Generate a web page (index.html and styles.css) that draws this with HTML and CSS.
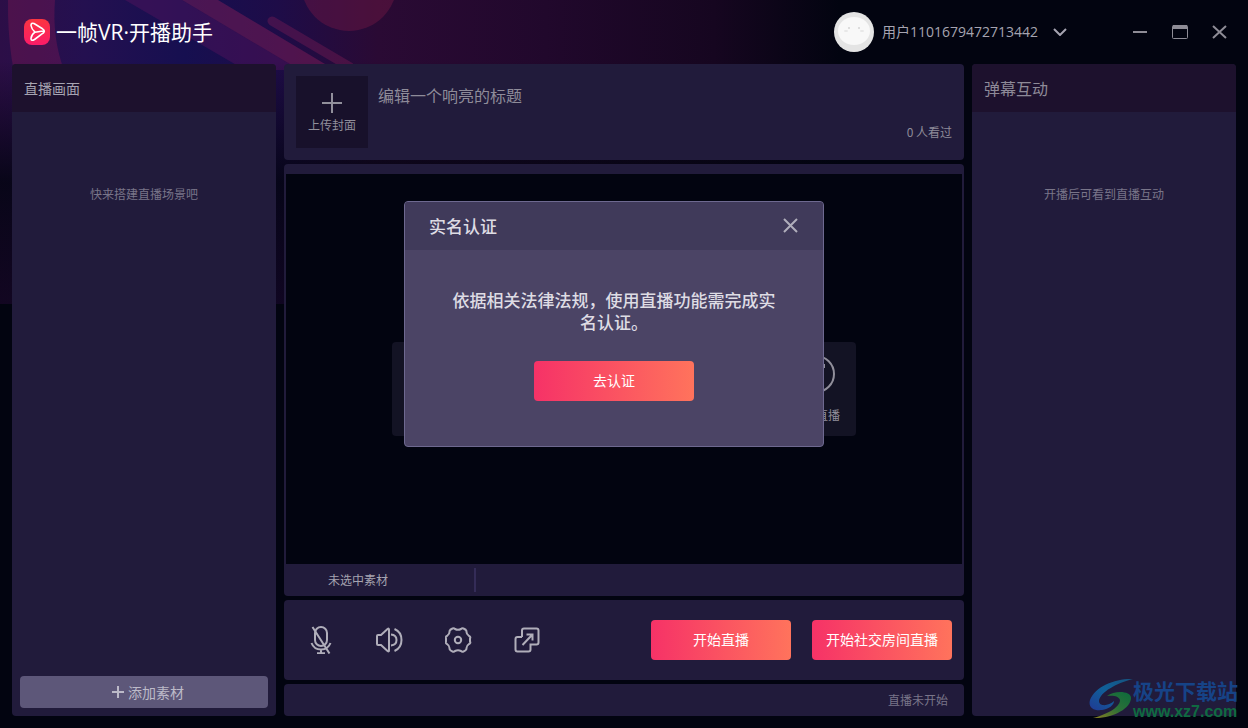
FILE: index.html
```html
<!DOCTYPE html>
<html lang="zh-CN">
<head>
    <meta charset="UTF-8">
    <meta name="viewport" content="width=device-width, initial-scale=1.0">
    <title>一帧VR·开播助手</title>
    <link rel="stylesheet" href="styles.css">
</head>
<body>

<!-- background art -->
<svg class="backdrop" width="840" height="304" viewBox="0 0 840 304" aria-hidden="true">
    <defs>
        <linearGradient id="base" x1="0" y1="0" x2="1" y2="0">
            <stop offset="0" stop-color="#2c0e47"/>
            <stop offset="0.1" stop-color="#241050"/>
            <stop offset="0.22" stop-color="#160f50"/>
            <stop offset="0.33" stop-color="#1e0c48"/>
            <stop offset="0.45" stop-color="#2a0a34"/>
            <stop offset="0.65" stop-color="#21082c"/>
            <stop offset="0.85" stop-color="#160620"/>
            <stop offset="1" stop-color="#020410"/>
        </linearGradient>
        <linearGradient id="fade" x1="0" y1="0" x2="0" y2="1">
            <stop offset="0.2" stop-color="#020410" stop-opacity="0"/>
            <stop offset="0.6" stop-color="#020410" stop-opacity="0.85"/>
            <stop offset="1" stop-color="#0c0418" stop-opacity="0.8"/>
        </linearGradient>
    </defs>
    <rect width="840" height="304" fill="url(#base)"/>
    <path d="M8 0H55Q52 38 64 70L80 110H24Q7 60 8 0z" fill="#8a1a55" opacity="0.35"/>
    <path d="M125 0H182L300 70H245z" fill="#5c1560" opacity="0.4"/>
    <path d="M182 0H218L335 70H300z" fill="#8a1f58" opacity="0.45"/>
    <path d="M272 21L350 67" stroke="#8a1f58" stroke-width="9" stroke-linecap="round" opacity="0.35"/>
    <circle cx="349" cy="-17" r="48" fill="#7a1a45" opacity="0.4"/>
    <rect width="840" height="304" fill="url(#fade)"/>
</svg>

<header class="topbar">
    <div class="brand">
        <svg width="26" height="26" viewBox="0 0 26 26">
            <defs>
                <linearGradient id="logo" x1="0" y1="0" x2="0" y2="1">
                    <stop offset="0" stop-color="#fb3540"/>
                    <stop offset="1" stop-color="#fb1b68"/>
                </linearGradient>
            </defs>
            <rect width="26" height="26" rx="8" fill="url(#logo)"/>
            <path d="M11 13.200L19 12Q21 13 19 14.200L10.500 20.500Q7 22.500 7 19.500Q7.500 15.500 11 13.200Q7.500 10 7 6.500Q7 3.500 10 4.500L18.500 9.800Q21 11.500 20 13" fill="none" stroke="#fff" stroke-width="1.600" stroke-linejoin="round"/>
        </svg>
        <h1>一帧VR·开播助手</h1>
    </div>
    <div class="account">
        <svg width="40" height="40" viewBox="0 0 40 40">
            <circle cx="20" cy="20" r="20" fill="#e4e4e4"/>
            <ellipse cx="20" cy="19" rx="16" ry="14" fill="#f8f8f8"/>
            <g fill="#d5d5d5">
                <circle cx="15" cy="16" r="1"/>
                <circle cx="25" cy="16" r="1"/>
                <ellipse cx="12" cy="19" rx="2" ry="1" fill="#e6e6e6"/>
                <ellipse cx="28" cy="19" rx="2" ry="1" fill="#e6e6e6"/>
            </g>
        </svg>
        <button class="user">用户1101679472713442
            <svg width="14" height="8" viewBox="0 0 14 8"><path d="M1 1l6 6 6-6"/></svg>
        </button>
    </div>
    <div class="window-buttons">
        <button aria-label="最小化"><svg width="16" height="16" viewBox="0 0 16 16"><path d="M1 8h14"/></svg></button>
        <button aria-label="最大化"><svg width="16" height="16" viewBox="0 0 16 16"><rect x="0.500" y="1.500" width="15" height="13" rx="1" stroke-width="1"/><path d="M1 3h14" stroke-width="4"/></svg></button>
        <button aria-label="关闭"><svg width="16" height="16" viewBox="0 0 16 16"><path d="M1 2l13 12M14 2L1 14"/></svg></button>
    </div>
</header>

<main>
    <aside class="panel side">
        <h2 class="small">直播画面</h2>
        <p>快来搭建直播场景吧</p>
        <button class="add">
            <svg width="12" height="12" viewBox="0 0 12 12"><path d="M6 0v12M0 6h12"/></svg>
            添加素材
        </button>
    </aside>

    <section class="center">
        <div class="panel info">
            <button class="cover">
                <svg width="20" height="20" viewBox="0 0 20 20"><path d="M10 0v20M0 10h20"/></svg>
                上传封面
            </button>
            <input type="text" aria-label="标题" placeholder="编辑一个响亮的标题">
            <span class="views">0 人看过</span>
        </div>

        <div class="panel preview">
            <div class="stage">
                <div class="sources">
                    <button class="source">
                        <svg width="38" height="38" viewBox="0 0 38 38"><circle cx="19" cy="19" r="18"/><path d="M24 10h3v3"/></svg>
                        <span>直播</span>
                    </button>
                </div>
            </div>
            <div class="selection">
                <span>未选中素材</span>
            </div>
        </div>

        <div class="panel controls">
            <div class="tools">
                <button aria-label="麦克风">
                    <svg width="28" height="28" viewBox="0 0 28 28"><rect x="8" y="1" width="12" height="19" rx="6"/><path d="M4.500 17c1.500 4 5 6.500 9.500 6.500s8-2.500 9.500-6.500M14 23.500V27M10 27.200h8M5.500 1l17 26.500"/></svg>
                </button>
                <button aria-label="音量">
                    <svg width="28" height="28" viewBox="0 0 28 28"><path d="M1 10Q1 9 2 9H5L11.500 3Q13 2 13 3.500V24.500Q13 26 11.500 25L5 19H2Q1 19 1 18zM15 8.500Q20.500 9 20.500 14T15 19.500M18.500 3Q25.500 6 25.500 14T18.500 25"/></svg>
                </button>
                <button aria-label="设置">
                    <svg width="28" height="28" viewBox="0 0 28 28"><path d="M7.500 2.500Q9 2 10 3Q13 4.500 16 3Q17 2 18.500 2.500Q21 3.500 21.500 5Q21 8 24 10Q26 11 25 12.500V15.500Q26 17 24 18Q21 20 21.500 23Q21 24.500 18.500 25.500Q17 26 16 25Q13 23.500 10 25Q9 26 7.500 25.500Q5 24.500 4.500 23Q5 20 2 18Q0 17 1 15.500V12.500Q0 11 2 10Q5 8 4.500 5Q5 3.500 7.500 2.500z"/><circle cx="13" cy="14" r="3.200"/></svg>
                </button>
                <button aria-label="弹出窗口">
                    <svg width="28" height="28" viewBox="0 0 28 28"><path d="M8 11V4.500Q8 2.500 10 2.500H22.500Q24.500 2.500 24.500 4.500V16.500Q24.500 18.500 22.500 18.500H16.500V23.500Q16.500 25.500 14.500 25.500H3.500Q1.500 25.500 1.500 23.500V13Q1.500 11 3.500 11H8M8.500 19L18 9M12.500 8.500H18.500V14.500"/></svg>
                </button>
            </div>
            <button class="primary">开始直播</button>
            <button class="primary">开始社交房间直播</button>
        </div>

        <div class="panel status">直播未开始</div>
    </section>

    <aside class="panel side">
        <h2>弹幕互动</h2>
        <p>开播后可看到直播互动</p>
    </aside>
</main>

<div class="overlay">
    <div class="dialog" role="dialog" aria-labelledby="dialogTitle">
        <div class="dialog-head">
            <h2 id="dialogTitle">实名认证</h2>
            <button aria-label="关闭"><svg width="16" height="16" viewBox="0 0 16 16"><path d="M1 1l13 13M14 1L1 14"/></svg></button>
        </div>
        <div class="dialog-body">
            <p>依据相关法律法规，使用直播功能需完成实名认证。</p>
            <button class="primary">去认证</button>
        </div>
    </div>
</div>

<div class="watermark">
    <svg width="44" height="42" viewBox="0 0 44 42">
        <defs>
            <linearGradient id="swirlBlue" x1="1" y1="0" x2="0" y2="1">
                <stop offset="0" stop-color="#17527f"/>
                <stop offset="0.500" stop-color="#106098"/>
                <stop offset="1" stop-color="#203a94"/>
            </linearGradient>
            <linearGradient id="swirlGreen" x1="1" y1="0" x2="0" y2="1">
                <stop offset="0" stop-color="#0c6a3c"/>
                <stop offset="0.500" stop-color="#2c7038"/>
                <stop offset="1" stop-color="#8a7e20"/>
            </linearGradient>
        </defs>
        <path d="M44 1C28 0 6 8 1 22C-1 29 4 33 13 32C20 31 25 27 25 23C20 28 10 29 10 23C11 14 28 5 44 1z" fill="url(#swirlBlue)"/>
        <path d="M18 18C26 12 42 13 42 20C42 30 24 41 4 40C16 37 31 30 31 22C30 18 24 17 18 18z" fill="url(#swirlGreen)"/>
    </svg>
    <div>
        <strong>极光下载站</strong>
        <span>www.xz7.com</span>
    </div>
</div>

</body>
</html>
```
FILE: styles.css
```css
* {
    box-sizing: border-box;
}

body {
    margin: 0;
    min-height: 100vh;
    display: flex;
    flex-direction: column;
    font-family: 'Noto Sans CJK SC', sans-serif;
    font-size: 12px;
    line-height: 16px;
    color: #a6a4b1;
    background-color: #020410;
}

h1, h2, p {
    margin: 0;
    font-weight: 400;
}

button {
    padding: 0;
    border: none;
    background: none;
    font: inherit;
    color: inherit;
    cursor: pointer;
}

svg {
    display: block;
    flex: none;
}

button svg {
    fill: none;
    stroke: currentColor;
    stroke-width: 2;
}

.backdrop {
    position: absolute;
    top: 0;
    left: 0;
    z-index: -1;
}

.topbar {
    height: 64px;
    padding: 0 20px 0 24px;
    display: flex;
    align-items: center;
    font-family: 'Open Sans', 'Noto Sans CJK SC', sans-serif;
}

.brand {
    flex: 1;
    display: flex;
    align-items: center;
    gap: 6px;
}

.brand h1 {
    font-size: 21px;
    line-height: 24px;
    color: #fff;
}

.account {
    display: flex;
    align-items: center;
    gap: 8px;
}

.user {
    display: flex;
    align-items: center;
    gap: 15px;
    font-size: 14px;
}

.window-buttons {
    display: flex;
    gap: 24px;
    margin-left: 65px;
    color: #8e8c96;
}

main {
    flex: 1;
    display: grid;
    grid-template-columns: 264px 1fr 264px;
    gap: 8px;
    padding: 0 12px 12px;
}

.panel {
    border-radius: 4px;
    background-color: #211b3b;
}

.side {
    display: flex;
    flex-direction: column;
    overflow: hidden;
}

.side h2 {
    padding: 12px;
    font-size: 16px;
    line-height: 24px;
    color: #8e8a98;
    background-color: #1d112d;
}

.side .small {
    font-size: 14px;
    color: #a6a4b1;
}

.side p {
    margin-top: 74px;
    text-align: center;
    color: #797589;
}

.add {
    display: flex;
    align-items: center;
    justify-content: center;
    gap: 4px;
    height: 32px;
    margin: auto 8px 8px;
    padding-left: 8px;
    border-radius: 4px;
    font-size: 14px;
    color: #bcbac8;
    background-color: #5d5779;
}

.center {
    display: flex;
    flex-direction: column;
    gap: 4px;
}

.info {
    display: flex;
    align-items: flex-start;
    gap: 10px;
    padding: 12px;
}

.cover {
    display: flex;
    flex-direction: column;
    align-items: center;
    justify-content: center;
    gap: 4px;
    width: 72px;
    height: 72px;
    padding-top: 2px;
    color: #918f9b;
    background-color: #18112b;
}

.info input {
    flex: 1;
    height: 38px;
    padding: 0;
    border: none;
    outline: none;
    font: inherit;
    font-size: 16px;
    color: #a6a4b1;
    background: none;
}

.info input::placeholder {
    color: #8e8b99;
}

.views {
    align-self: flex-end;
    margin-bottom: 8px;
    color: #8e8b99;
}

.preview {
    flex: 1;
    display: flex;
    flex-direction: column;
    padding: 10px 2px 0;
}

.stage {
    flex: 1;
    display: flex;
    align-items: center;
    justify-content: center;
    padding-top: 40px;
    background-color: #020410;
}

.sources {
    display: flex;
    justify-content: flex-end;
    width: 464px;
    height: 94px;
    padding: 13px 16px;
    border-radius: 4px;
    background-color: #131324;
}

.source {
    display: flex;
    flex-direction: column;
    align-items: center;
    justify-content: space-between;
    width: 48px;
    color: #918f9b;
}

.source span {
    align-self: flex-end;
}

.selection {
    display: flex;
    align-items: center;
    height: 32px;
}

.selection span {
    width: 190px;
    padding: 4px 0 4px 42px;
    border-right: 2px solid #342c57;
}

.controls {
    display: flex;
    align-items: center;
    gap: 21px;
    height: 80px;
    padding: 0 12px 0 23px;
}

.tools {
    flex: 1;
    display: flex;
    gap: 41px;
    color: #b0aeba;
}

.primary {
    width: 140px;
    height: 40px;
    padding-bottom: 2px;
    border-radius: 4px;
    font-size: 14px;
    color: #fff;
    background: linear-gradient(to right, #f63267, #ff735c);
}

.status {
    padding: 8px 16px;
    text-align: right;
    color: #797589;
}

.overlay {
    position: absolute;
    top: 201px;
    left: 0;
    right: 20px;
    display: flex;
    justify-content: center;
}

.dialog {
    width: 420px;
    border: 1px solid #6e6990;
    border-radius: 4px;
    overflow: hidden;
    font-size: 17px;
    line-height: 22px;
    color: #dedce4;
    background-color: #4b4465;
}

.dialog-head {
    display: flex;
    align-items: center;
    justify-content: space-between;
    height: 48px;
    padding: 0 24px;
    background-color: #403a5a;
}

.dialog-head h2 {
    font-size: 17px;
    font-weight: 500;
}

.dialog-head button {
    color: #b0aebb;
}

.dialog-body {
    padding: 39px 44px 45px;
    text-align: center;
}

.dialog-body p {
    margin-bottom: 28px;
    font-weight: 500;
}

.dialog-body .primary {
    width: 160px;
}

.watermark {
    position: absolute;
    right: 10px;
    bottom: 8px;
    display: flex;
    align-items: center;
    font-family: 'Open Sans', 'Noto Sans CJK SC', sans-serif;
    font-size: 16px;
    line-height: 16px;
}

.watermark strong {
    display: block;
    font-size: 21px;
    line-height: 26px;
    color: #164387;
}

.watermark span {
    display: block;
    font-family: 'Liberation Sans', sans-serif;
    font-weight: 700;
    color: #0f6a41;
}
```
